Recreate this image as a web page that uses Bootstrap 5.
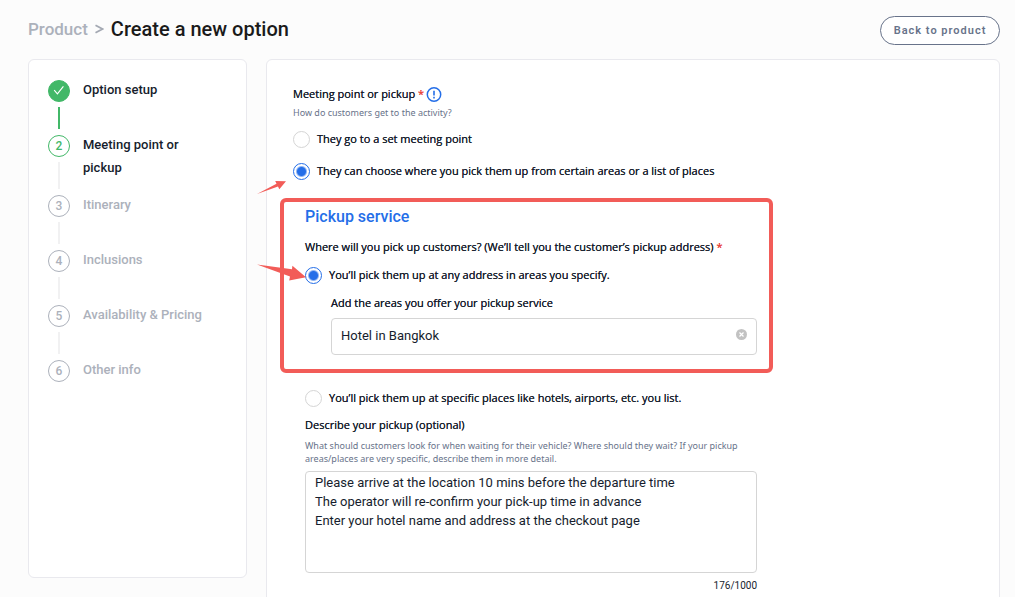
<!DOCTYPE html>
<html lang="en">
<head>
<meta charset="utf-8">
<meta name="viewport" content="width=device-width, initial-scale=1">
<title>Create a new option</title>
<link href="https://cdn.jsdelivr.net/npm/bootstrap@5.3.0/dist/css/bootstrap.min.css" rel="stylesheet">
<style>
  :root { --ink:#161d2d; --muted:#acb1bb; --slate:#68738a; --blue:#246ee8; --green:#42b868; --mark:#f25c58; }
  body { background:#fcfcfc; color:var(--ink); font-family:Roboto,"Liberation Sans",sans-serif; font-size:13px; line-height:19px; }
  .page { padding:16px 15px 0 28px; }
  .page-head { margin-bottom:14px; }
  .page-head nav { gap:7px; padding-bottom:3px; }
  .crumb { color:var(--muted); font-size:17px; font-weight:500; text-decoration:none; }
  .page-title { color:#1a1a1a; font-size:20px; line-height:24px; font-weight:500; }
  .btn-back { width:120px; height:29px; padding:1px 0 0; border:1px solid var(--slate); border-radius:15px; background:#fff; color:var(--slate); font-size:11px; font-weight:600; letter-spacing:1px; }
  .layout { gap:19px; }
  .panel { background:#fff; border:1px solid #e9e9ee; border-radius:6px; }
  .side { flex:0 0 219px; min-height:calc(100vh - 78px); padding:18px 19px; }
  .content-panel { min-width:0; padding:24px 26px; }

  .step { gap:13px; min-height:55px; color:var(--muted); font-weight:500; line-height:23px; }
  .step-text { padding:0 16px 14px 0; }
  .step-mark { padding:2px 0 4px; }
  .step-no { width:22px; height:22px; border:1px solid currentColor; border-radius:50%; font-size:12px; line-height:20px; }
  .step-line { width:2px; margin-top:5px; background:#f1f1f2; }
  .step.done .step-no { background:var(--green); border-color:var(--green); }
  .step.done .step-line { background:var(--green); }
  .step.done .step-text, .step.now .step-text { color:var(--ink); }
  .step.now .step-no { color:var(--green); }

  .form-area { max-width:464px; }
  .lbl { font-family:"Open Sans","Liberation Sans",sans-serif; font-size:11px; line-height:20px; font-weight:500; text-shadow:0 0 0 currentColor; }
  .req { color:#e8453c; }
  .info { margin-left:2px; }
  .hint { color:var(--slate); font-family:"Noto Sans","Liberation Sans",sans-serif; font-size:9px; line-height:13px; }
  .intro { margin:2px 0 10px; }
  .choice { gap:7px; min-height:20px; }
  .choice + .choice { margin-top:12px; }
  .choice input { appearance:none; flex:none; width:17px; height:17px; margin:0; border:1px solid #d5d5d5; border-radius:50%; background:#fff; }
  .choice input:checked { border-color:var(--blue); background:radial-gradient(circle, var(--blue) 4px, #fff 6px); }
  .nested { margin-left:12px; }
  .nested .lbl[for="describe"] { margin-top:7px; }
  .marked { margin:17px -16px 15px -13px; padding:4px 12px 14px 21px; border:4px solid var(--mark); border-radius:6px; }
  .pickup-title { color:var(--blue); font-size:16px; line-height:22px; font-weight:500; }
  .question { margin:9px 0 8px; }
  .area-field { margin-left:26px; }
  .field { border:1px solid #d5d5d5; border-radius:4px; color:var(--ink); font-size:13px; background:#fff; }
  .field-line { height:37px; margin-top:5px; padding:0 36px 2px 9px; }
  .field-area { height:102px; margin-top:6px; padding:1px 9px; line-height:19px; resize:none; }
  .clear-btn { right:10px; top:11px; line-height:0; }
  .counter { margin-top:7px; font-size:10px; line-height:12px; }
  .arrow-a { left:-36px; top:18px; }
  .arrow-b { left:-49px; top:-2px; }
</style>
</head>
<body>
<div class="page">
  <header class="page-head d-flex align-items-center justify-content-between">
    <nav class="d-flex align-items-center" aria-label="Breadcrumb">
      <a class="crumb" href="#">Product</a>
      <svg width="9" height="10" viewBox="0 0 9 10" fill="none" stroke="#a4a9b3" stroke-width="1.8" aria-hidden="true"><path d="M.5 1.2 7.5 5 .5 8.8"/></svg>
      <h1 class="page-title mb-0">Create a new option</h1>
    </nav>
    <button class="btn btn-back" type="button">Back to product</button>
  </header>

  <div class="layout d-flex align-items-start">
    <aside class="panel side">
      <ol class="list-unstyled mb-0">
        <li class="step done d-flex"><div class="step-mark d-flex flex-column align-items-center"><span class="step-no d-flex align-items-center justify-content-center"><svg width="12" height="10" viewBox="0 0 12 10" fill="none" stroke="#fff" stroke-width="1.1" aria-label="Done"><path d="M1.2 4.2 4.4 7.8 10.4 .3"/></svg></span><span class="step-line flex-grow-1"></span></div><div class="step-text">Option setup</div></li>
        <li class="step now d-flex"><div class="step-mark d-flex flex-column align-items-center"><span class="step-no text-center">2</span><span class="step-line flex-grow-1"></span></div><div class="step-text">Meeting point or pickup</div></li>
        <li class="step d-flex"><div class="step-mark d-flex flex-column align-items-center"><span class="step-no text-center">3</span><span class="step-line flex-grow-1"></span></div><div class="step-text">Itinerary</div></li>
        <li class="step d-flex"><div class="step-mark d-flex flex-column align-items-center"><span class="step-no text-center">4</span><span class="step-line flex-grow-1"></span></div><div class="step-text">Inclusions</div></li>
        <li class="step d-flex"><div class="step-mark d-flex flex-column align-items-center"><span class="step-no text-center">5</span><span class="step-line flex-grow-1"></span></div><div class="step-text">Availability &amp; Pricing</div></li>
        <li class="step d-flex"><div class="step-mark d-flex flex-column align-items-center"><span class="step-no text-center">6</span></div><div class="step-text">Other info</div></li>
      </ol>
    </aside>

    <main class="panel content-panel flex-grow-1">
      <form class="form-area">
        <div class="d-flex align-items-center lbl">
          <span>Meeting point or pickup <span class="req">*</span></span>
          <svg class="info" width="16" height="16" viewBox="0 0 16 16" fill="none" stroke="#246ee8" aria-label="Information"><circle cx="8" cy="8.5" r="6.7" stroke-width="1.5"/><path d="M8 4.8v4.6M8 10.8v1.6" stroke-width="1.6"/></svg>
        </div>
        <p class="hint intro">How do customers get to the activity?</p>
        <div class="choice d-flex align-items-center">
          <input type="radio" name="arrival" id="setPoint"><label class="lbl" for="setPoint">They go to a set meeting point</label>
        </div>
        <div class="choice d-flex align-items-center position-relative">
          <input type="radio" name="arrival" id="choosePoint" checked><label class="lbl text-nowrap" for="choosePoint">They can choose where you pick them up from certain areas or a list of places</label>
          <svg class="arrow-a position-absolute" width="30" height="16" viewBox="0 0 30 16" fill="#f25c58" aria-hidden="true"><path d="M0 15 19.5 4.8 18.2 1.9 29 2.2 22.3 10.3 21 7.6Z"/></svg>
        </div>

        <section class="marked">
          <h2 class="pickup-title mb-0">Pickup service</h2>
          <p class="lbl question text-nowrap">Where will you pick up customers? (We’ll tell you the customer’s pickup address) <span class="req">*</span></p>
          <div class="choice d-flex align-items-center position-relative">
            <input type="radio" name="pickup" id="anyAddress" checked><label class="lbl" for="anyAddress">You’ll pick them up at any address in areas you specify.</label>
            <svg class="arrow-b position-absolute" width="50" height="20" viewBox="0 0 50 20" fill="#f25c58" aria-hidden="true"><path d="M1 1.5 36 6.3 36.4 2.8 50 14.2 33.2 17.6 34 13.6Z"/></svg>
          </div>
          <div class="area-field">
            <label class="lbl d-block mt-2" for="areas">Add the areas you offer your pickup service</label>
            <div class="position-relative">
              <input class="field field-line w-100 d-block" id="areas" type="text" value="Hotel in Bangkok">
              <button class="clear-btn btn p-0 border-0 position-absolute" type="button" aria-label="Clear"><svg width="11" height="11" viewBox="0 0 11 11"><circle cx="5.5" cy="5.5" r="5.5" fill="#c2c2c2"/><path d="m3.5 3.5 4 4m0-4-4 4" stroke="#fff" stroke-width="1.2"/></svg></button>
            </div>
          </div>
        </section>

        <div class="nested">
          <div class="choice d-flex align-items-center">
            <input type="radio" name="pickup" id="places"><label class="lbl" for="places">You’ll pick them up at specific places like hotels, airports, etc. you list.</label>
          </div>
          <label class="lbl d-block" for="describe">Describe your pickup (optional)</label>
          <p class="hint mb-0 mt-1">What should customers look for when waiting for their vehicle? Where should they wait? If your pickup areas/places are very specific, describe them in more detail.</p>
          <textarea class="field field-area w-100 d-block" id="describe">Please arrive at the location 10 mins before the departure time
The operator will re-confirm your pick-up time in advance
Enter your hotel name and address at the checkout page</textarea>
          <div class="counter text-end">176/1000</div>
        </div>
      </form>
    </main>
  </div>
</div>
<script src="https://cdn.jsdelivr.net/npm/bootstrap@5.3.0/dist/js/bootstrap.bundle.min.js"></script>
</body>
</html>
